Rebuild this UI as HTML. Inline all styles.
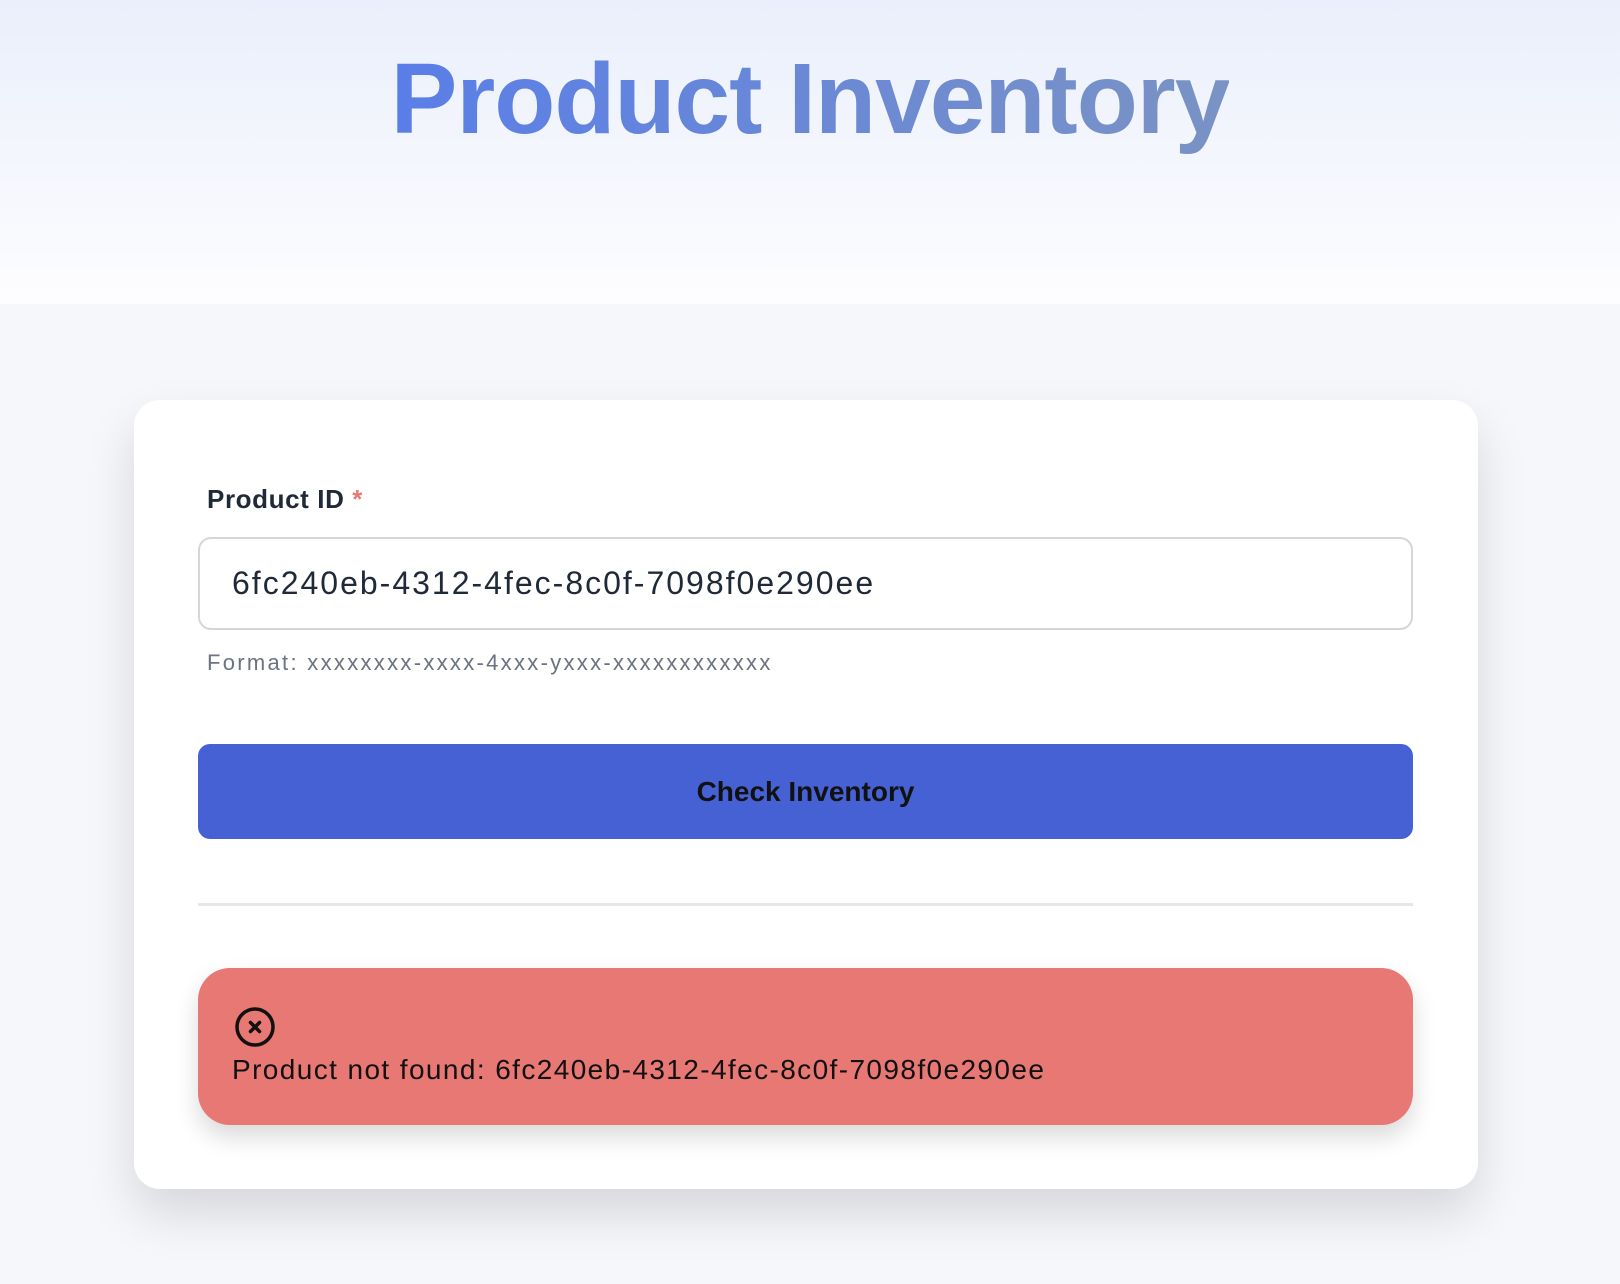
<!DOCTYPE html>
<html><head><meta charset="utf-8"><style>
*{box-sizing:border-box;margin:0;padding:0}
body{width:1620px;height:1284px;background:#f6f7fb;font-family:"Liberation Sans",sans-serif;position:relative;overflow:hidden}
.hdr{position:absolute;left:0;top:0;width:1620px;height:304px;background:linear-gradient(#eaeffb,#fdfdff)}
h1{position:absolute;left:0;width:1620px;top:42px;text-align:center;font-size:100px;font-weight:700;letter-spacing:-1px;line-height:115px}
h1 span{background:linear-gradient(90deg,#5a7ee8,#7a93c4);-webkit-background-clip:text;background-clip:text;color:transparent}
.card{position:absolute;left:134px;top:400px;width:1344px;height:789px;background:#fff;border-radius:26px;box-shadow:0 25px 50px rgba(0,0,0,.13)}
.lbl{position:absolute;left:207px;top:484px;font-size:26px;color:#1f2937;font-weight:700;letter-spacing:0.6px;-webkit-text-stroke:0}
.lbl b{color:#e77873}
.inp{position:absolute;left:198px;top:537px;width:1215px;height:93px;border:2px solid #d4d6da;border-radius:13px;font-size:32px;color:#1f2937;padding-left:32px;line-height:89px;letter-spacing:2px}
.fmt{position:absolute;left:207px;top:650px;font-size:22px;color:#6b7280;letter-spacing:2.3px}
.btn{position:absolute;left:198px;top:744px;width:1215px;height:95px;background:#4561d4;border-radius:12px;text-align:center;line-height:95px;font-size:28px;font-weight:700;color:#111}
.div{position:absolute;left:198px;top:903px;width:1215px;height:3px;background:#e5e7eb}
.alert{position:absolute;left:198px;top:968px;width:1215px;height:157px;background:#e77873;border-radius:32px;box-shadow:0 12px 24px rgba(0,0,0,.15)}
.alert svg{position:absolute;left:36px;top:38px}
.alert p{position:absolute;left:34px;top:86px;font-size:28px;color:#111;letter-spacing:1.4px}
</style></head><body>
<div class="hdr"></div>
<h1><span>Product Inventory</span></h1>
<div class="card"></div>
<div class="lbl">Product ID <b>*</b></div>
<div class="inp">6fc240eb-4312-4fec-8c0f-7098f0e290ee</div>
<div class="fmt">Format: xxxxxxxx-xxxx-4xxx-yxxx-xxxxxxxxxxxx</div>
<div class="btn">Check Inventory</div>
<div class="div"></div>
<div class="alert">
<svg width="42" height="42" viewBox="0 0 42 42"><circle cx="21" cy="21" r="18" fill="none" stroke="#111" stroke-width="3.5"/><path d="M16.5 16.5l9 9M25.5 16.5l-9 9" stroke="#111" stroke-width="3.5" stroke-linecap="round"/></svg>
<p>Product not found: 6fc240eb-4312-4fec-8c0f-7098f0e290ee</p>
</div>
</body></html>
